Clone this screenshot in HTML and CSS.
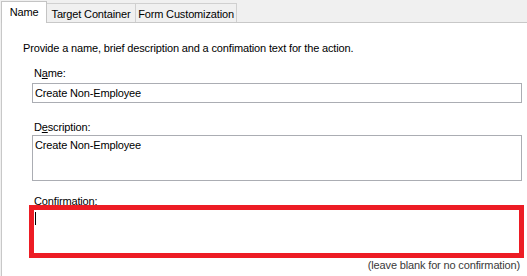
FILE: index.html
```html
<!DOCTYPE html>
<html>
<head>
<meta charset="utf-8">
<link rel="stylesheet" href="styles.css">
</head>
<body>
<div class="tabs">
  <div class="tab active">Name</div>
  <div class="tab tab-target">Target Container</div>
  <div class="tab tab-form">Form Customization</div>
</div>
<div class="panel">
  <p class="intro">Provide a name, brief description and a confimation text for the action.</p>
  <div class="fields">
    <label class="lbl">N<u>a</u>me:</label>
    <div class="input">Create Non-Employee</div>
    <label class="lbl lbl-desc">D<u>e</u>scription:</label>
    <div class="textarea">Create Non-Employee</div>
    <label class="lbl lbl-conf">Confirmation:</label>
    <div class="confirm"><span class="caret"></span></div>
    <div class="hint">(leave blank for no confirmation)</div>
  </div>
</div>
</body>
</html>
```

FILE: styles.css
```css
html, body {
  margin: 0;
  padding: 0;
  background: #f0f0f0;
  font-family: "Liberation Sans", Arial, sans-serif;
  font-size: 11px;
  letter-spacing: -0.15px;
  color: #000;
  width: 527px;
  height: 276px;
  overflow: hidden;
}
.tabs {
  display: flex;
  align-items: flex-end;
  height: 22px;
  padding-left: 1px;
}
.tab {
  box-sizing: border-box;
  height: 19px;
  padding-top: 3px;
  border: 1px solid #d0d0d0;
  border-bottom: none;
  border-left: none;
  background: #f0f0f0;
  line-height: 14px;
  text-align: center;
}
.tab-target { width: 89px; }
.tab-form { width: 101px; }
.tab.active {
  width: 46px;
  height: 22px;
  padding-top: 3px;
  background: #fff;
  border: 1px solid #c4c4c4;
  border-bottom: none;
  margin-bottom: -1px;
  position: relative;
  z-index: 1;
}
.panel {
  background: #fff;
  border-top: 1px solid #c8c8c8;
  border-left: 1px solid #c8c8c8;
  margin-left: 1px;
  height: 260px;
  padding: 0 0 0 21px;
}
.intro {
  margin: 0;
  padding-top: 19px;
  line-height: 13px;
}
.fields {
  margin-left: 9px;
  width: 490px;
  display: flex;
  flex-direction: column;
}
.lbl {
  display: block;
  line-height: 13px;
  margin-top: 12px;
  margin-left: 2px;
}
.lbl u { text-decoration: underline; }
.input {
  box-sizing: border-box;
  height: 20px;
  margin-top: 3px;
  border: 1px solid #abadb3;
  padding: 2px 2px;
  line-height: 14px;
}
.lbl-desc { margin-top: 18px; }
.textarea {
  box-sizing: border-box;
  height: 46px;
  margin-top: 1px;
  border: 1px solid #abadb3;
  padding: 2px 2px;
  line-height: 14px;
}
.lbl-conf { margin-top: 14px; }
.confirm {
  box-sizing: border-box;
  height: 53px;
  width: 495px;
  margin-left: -3px;
  margin-top: -3px;
  border: 5px solid #ed1c24;
  padding: 2px 1px;
}
.caret {
  display: block;
  width: 1px;
  height: 13px;
  background: #000;
  margin-top: 0;
}
.hint {
  text-align: right;
  color: #3a3a3a;
  line-height: 13px;
  margin-top: 1px;
  margin-right: 2px;
}
```
